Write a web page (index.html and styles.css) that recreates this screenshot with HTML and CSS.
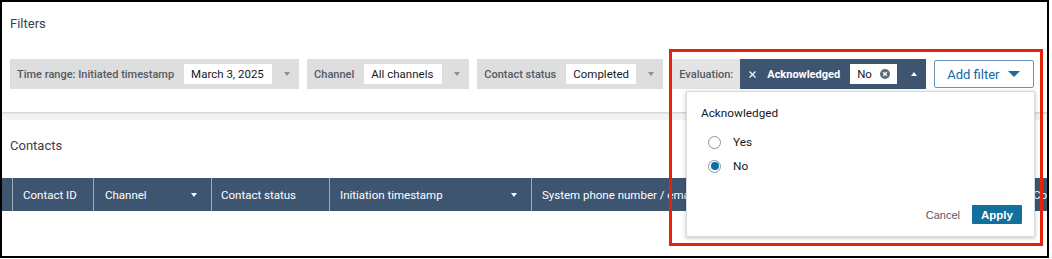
FILE: index.html
```html
<!DOCTYPE html>
<html>
<head>
<meta charset="utf-8">
<link rel="stylesheet" href="styles.css">
</head>
<body>
<div class="frame">
  <section class="filters-panel">
    <h2 class="panel-title">Filters</h2>
    <div class="filter-row">
      <div class="chip">
        <span class="chip-label">Time range: Initiated timestamp</span>
        <span class="chip-value v-date">March 3, 2025</span>
        <span class="caret"></span>
      </div>
      <div class="chip">
        <span class="chip-label">Channel</span>
        <span class="chip-value v-channel">All channels</span>
        <span class="caret"></span>
      </div>
      <div class="chip">
        <span class="chip-label">Contact status</span>
        <span class="chip-value v-status">Completed</span>
        <span class="caret"></span>
      </div>
      <div class="chip chip-eval">
        <span class="chip-label eval-label">Evaluation:</span>
        <div class="eval-token">
          <svg class="token-x" width="7" height="7" viewBox="0 0 7 7"><path d="M0.5 0.5L6.5 6.5M6.5 0.5L0.5 6.5" stroke="#fff" stroke-width="1.1" fill="none"/></svg>
          <span class="token-name">Acknowledged</span>
          <span class="chip-value token-value">No<svg class="clear-icon" width="10" height="10" viewBox="0 0 10 10"><circle cx="5" cy="5" r="5" fill="#5f6b7a"/><path d="M3.2 3.2L6.8 6.8M6.8 3.2L3.2 6.8" stroke="#fff" stroke-width="1.4"/></svg></span>
          <span class="caret caret-up"></span>
        </div>
      </div>
      <button class="add-filter">Add filter<span class="add-caret"></span></button>
    </div>
  </section>
  <div class="page-gap"></div>
  <section class="contacts-panel">
    <h2 class="panel-title contacts-title">Contacts</h2>
    <div class="table-head">
      <div class="th th-select"></div>
      <div class="th th-id">Contact ID</div>
      <div class="th th-channel">Channel<span class="caret head-caret"></span></div>
      <div class="th th-status">Contact status</div>
      <div class="th th-time">Initiation timestamp<span class="caret head-caret"></span></div>
      <div class="th th-phone">System phone number / email</div>
      <div class="th th-more">Co</div>
    </div>
  </section>

  <div class="popover">
    <div class="pop-title">Acknowledged</div>
    <label class="radio-row first"><span class="radio"></span><span class="radio-text">Yes</span></label>
    <label class="radio-row"><span class="radio checked"></span><span class="radio-text">No</span></label>
    <div class="pop-actions">
      <span class="btn-cancel">Cancel</span>
      <span class="btn-apply">Apply</span>
    </div>
  </div>

  <div class="highlight"></div>
</div>
</body>
</html>
```

FILE: styles.css
```css
* { box-sizing: border-box; }
html, body { margin: 0; padding: 0; background: #fff; }
body { font-family: Roboto, "Liberation Sans", Arial, sans-serif; color: #16191f; }

.frame {
  position: relative;
  width: 1049px;
  height: 258px;
  border: 2px solid #000;
  overflow: hidden;
  background: #f2f3f3;
}

.filters-panel {
  background: #fff;
  height: 110px;
  padding: 14px 0 0 8px;
  box-shadow: 0 1px 2px rgba(0,0,0,0.18);
  position: relative;
}

.panel-title {
  margin: 0;
  font-size: 13px;
  line-height: 16px;
  font-weight: 400;
  color: #3b4048;
}

.filter-row {
  margin-top: 27px;
  display: flex;
  align-items: center;
  gap: 8px;
  height: 30px;
}

.chip {
  flex: none;
  display: flex;
  align-items: center;
  height: 30px;
  background: #dedede;
  padding: 0 9px 0 7px;
  white-space: nowrap;
}

.chip-label {
  font-size: 11px;
  font-weight: 500;
  color: #535a63;
  margin-right: 10px;
}

.chip-value {
  display: flex;
  align-items: center;
  height: 20px;
  background: #fff;
  padding: 0 0 0 7px;
  font-size: 11.5px;
  color: #16191f;
}
.v-date { width: 88px; }
.v-channel { width: 78px; }
.v-status { width: 70px; }

.caret {
  width: 0;
  height: 0;
  border-left: 3.5px solid transparent;
  border-right: 3.5px solid transparent;
  border-top: 4px solid #8a9099;
  margin-left: 12px;
}

.chip-eval {
  padding: 0;
  background: #e4e4e4;
}
.eval-label { margin-left: 8px; margin-right: 7px; }

.eval-token {
  display: flex;
  align-items: center;
  height: 30px;
  background: #3e5572;
  padding: 0 9px 0 9px;
}
.token-x { display: block; margin-right: 11px; }
.token-name {
  font-size: 11px;
  font-weight: 700;
  color: #fff;
  margin-right: 10px;
}
.token-value { width: 47px; }
.clear-icon { display: block; margin-left: 8px; }
.caret-up {
  border-top: 0;
  border-bottom: 4px solid #fff;
  margin-left: 14px;
}

.add-filter {
  flex: none;
  display: flex;
  align-items: center;
  height: 28px;
  padding: 0 13px 0 12px;
  background: #fff;
  border: 1px solid #6d94b3;
  border-radius: 2px;
  font-family: inherit;
  font-size: 13px;
  color: #0e6aa6;
  white-space: nowrap;
}
.add-caret {
  width: 0;
  height: 0;
  border-left: 6px solid transparent;
  border-right: 6px solid transparent;
  border-top: 6px solid #1d6aa5;
  margin-left: 9px;
}

.page-gap { height: 8px; }

.contacts-panel {
  background: #fff;
  height: 140px;
  padding-top: 18px;
}
.contacts-title { padding-left: 8px; }

.table-head {
  margin-top: 24px;
  display: flex;
  height: 33px;
  background: #3e5572;
  color: #fff;
  font-size: 11.5px;
  white-space: nowrap;
}
.th {
  display: flex;
  align-items: center;
  justify-content: space-between;
  padding-left: 10px;
  border-right: 1px solid rgba(255,255,255,0.5);
  flex: none;
  overflow: hidden;
}
.th-select { width: 11px; padding: 0; }
.th-id { width: 81px; }
.th-channel { width: 118px; padding-left: 11px; }
.th-status { width: 118px; padding-left: 9px; }
.th-time { width: 202px; }
.th-phone { width: 492px; }
.th-more { width: 30px; padding-left: 9px; border-right: 0; }
.head-caret { border-top-color: #fff; margin-right: 14px; }

.popover {
  position: absolute;
  left: 684px;
  top: 89px;
  width: 349px;
  height: 146px;
  background: #fff;
  border: 1px solid #d7dbdf;
  box-shadow: 0 1px 4px rgba(0,0,0,0.25);
  padding: 13px 12px 12px 14px;
  display: flex;
  flex-direction: column;
  z-index: 2;
}
.pop-title {
  font-size: 11.8px;
  line-height: 16px;
  color: #16191f;
}
.radio-row {
  display: flex;
  align-items: center;
  height: 24px;
  padding-left: 7px;
}
.radio-row.first { margin-top: 9px; }
.radio {
  width: 13px;
  height: 13px;
  border-radius: 50%;
  border: 1px solid #8b95a1;
  background: #fff;
  margin-right: 12px;
  position: relative;
}
.radio.checked::after {
  content: "";
  position: absolute;
  left: 1.5px;
  top: 1.5px;
  width: 8px;
  height: 8px;
  border-radius: 50%;
  background: #0a6f9f;
}
.radio-text { font-size: 11.8px; color: #16191f; }

.pop-actions {
  margin-top: auto;
  display: flex;
  align-items: center;
  justify-content: flex-end;
  gap: 12px;
  font-family: "Liberation Sans", Arial, sans-serif;
}
.btn-cancel { font-size: 11px; color: #545b64; }
.btn-apply {
  display: flex;
  align-items: center;
  justify-content: center;
  width: 50px;
  height: 19px;
  background: #12709c;
  color: #fff;
  font-size: 11.5px;
  font-weight: 700;
  border-radius: 1px;
}

.highlight {
  position: absolute;
  left: 667px;
  top: 47px;
  width: 374px;
  height: 197px;
  border: 3px solid #e5220c;
  z-index: 3;
  pointer-events: none;
}
```
